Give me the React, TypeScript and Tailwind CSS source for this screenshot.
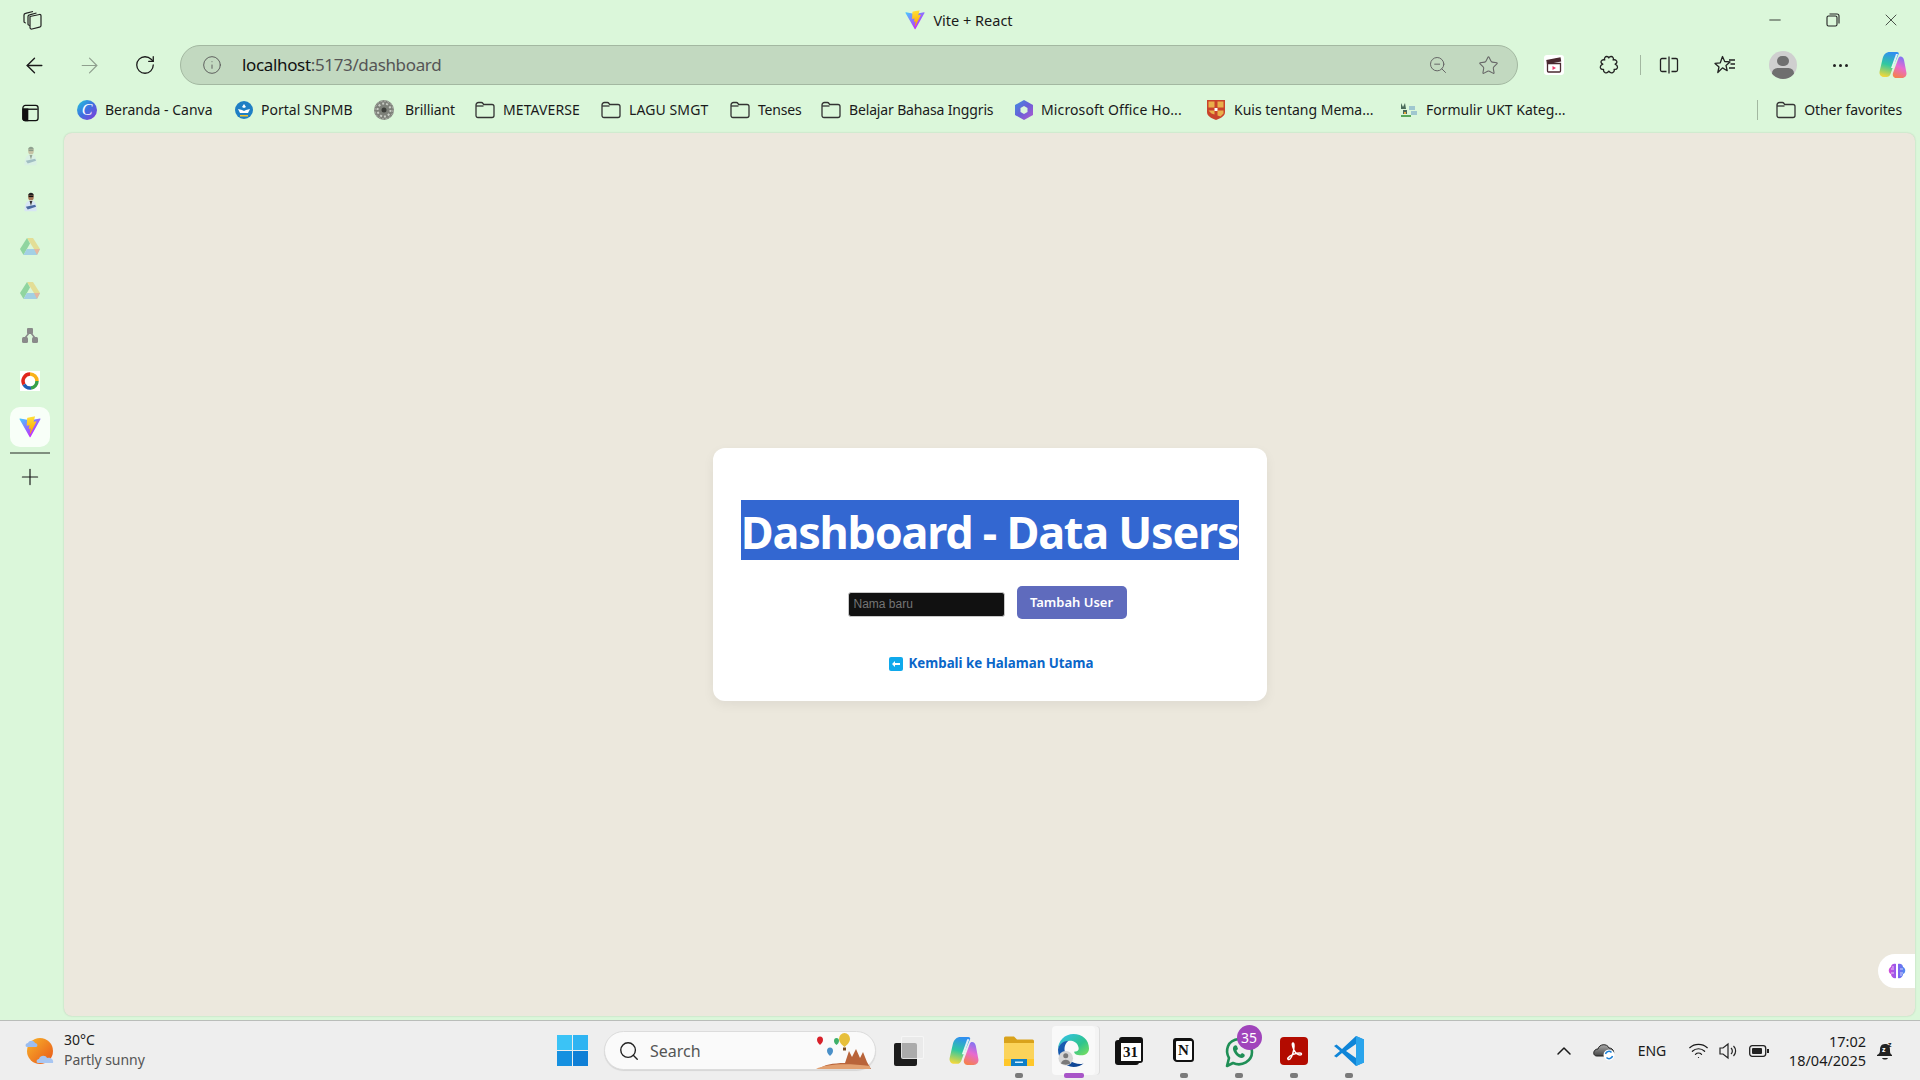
import React from "react";
import { ArrowLeft, ArrowRight, RotateCw, Info, ZoomOut, Star, Minus, Plus, X, ChevronUp, Search, Wifi } from "lucide-react";

const Vite = ({ size = 20, id }: { size?: number; id: string }) => (
  <svg width={size} height={size} viewBox="0 0 410 404" fill="none">
    <path fill={`url(#${id}a)`} d="M399.641 59.525 215.643 388.545c-3.799 6.793-13.559 6.833-17.415.073L10.582 59.556C6.38 52.19 12.68 43.266 21.028 44.76l184.195 32.923c1.175.21 2.378.208 3.553-.006l180.343-32.87c8.32-1.517 14.649 7.337 10.522 14.718Z" />
    <path fill={`url(#${id}b)`} d="M292.965 1.574 156.801 28.255a5 5 0 0 0-4.03 4.611l-8.376 141.464c-.197 3.332 2.863 5.918 6.115 5.168l37.91-8.749c3.547-.818 6.752 2.306 6.023 5.873l-11.263 55.153c-.758 3.712 2.727 6.886 6.352 5.785l23.415-7.114c3.63-1.102 7.118 2.081 6.35 5.796l-17.899 86.633c-1.12 5.419 6.088 8.374 9.094 3.728l2.008-3.103 110.954-221.428c1.858-3.707-1.346-7.935-5.418-7.15l-39.022 7.532c-3.667.707-6.787-2.708-5.752-6.296l25.469-88.291c1.036-3.594-2.095-7.012-5.766-6.293Z" />
    <defs>
      <linearGradient id={`${id}a`} x1="6" y1="33" x2="235" y2="344" gradientUnits="userSpaceOnUse"><stop stopColor="#41D1FF" /><stop offset="1" stopColor="#BD34FE" /></linearGradient>
      <linearGradient id={`${id}b`} x1="194" y1="8" x2="236" y2="292" gradientUnits="userSpaceOnUse"><stop stopColor="#FFEA83" /><stop offset=".08" stopColor="#FFDD35" /><stop offset="1" stopColor="#FFA800" /></linearGradient>
    </defs>
  </svg>
);

const Folder = () => (
  <svg width="20" height="18" viewBox="0 0 20 18" fill="none" stroke="#333" strokeWidth="1.3">
    <path d="M1 4c0-1.500 1-2.500 2.500-2.500h2.800c.8 0 1.200.3 1.700 1l.7 1h8.300c1.200 0 2 .8 2 2v9c0 1.300-.8 2-2 2H3c-1.200 0-2-.7-2-2V4Z" />
    <path d="M1 5h7.500" />
  </svg>
);

const Canva = () => (
  <div className="w-[20px] h-[20px] rounded-full bg-gradient-to-br from-[#16c8d8] via-[#3e6de0] to-[#7a2fd8] flex items-center justify-center text-white italic text-[16px] font-['Liberation_Serif',serif] leading-none">C</div>
);
const Snpmb = () => (
  <svg width="18" height="18" viewBox="0 0 18 18"><circle cx="9" cy="9" r="9" fill="#1f7fc4" /><path d="M9 3l2 3-2 1-2-1zM3 8l4 1 2 1 2-1 4-1-2 4H5z" fill="#fff" /><path d="M5 14h8v1.500H5z" fill="#f2c230" /></svg>
);
const Brilliant = () => (
  <svg width="20" height="20" viewBox="0 0 20 20"><circle cx="10" cy="10" r="10" fill="#7d8079" /><circle cx="10" cy="10" r="6.500" fill="none" stroke="#c8cbc4" strokeWidth="2" strokeDasharray="2 2" /><circle cx="10" cy="10" r="2.500" fill="#3c3e3a" /><circle cx="10" cy="10" r="9" fill="none" stroke="#b6b9b2" strokeWidth="1" strokeDasharray="2 1.500" /></svg>
);
const Office = () => (
  <svg width="18" height="20" viewBox="0 0 18 20"><defs><linearGradient id="off" x1="0" y1="0" x2="1" y2="1"><stop stopColor="#3f8fe0" /><stop offset=".5" stopColor="#6a5fd8" /><stop offset="1" stopColor="#b45ad0" /></linearGradient></defs><path d="M9 0l9 5v10l-9 5-9-5V5z" fill="url(#off)" /><path d="M9 6l3.500 2v4L9 14l-3.500-2V8z" fill="#dbf7da" /></svg>
);
const Shield = () => (
  <svg width="18" height="20" viewBox="0 0 18 20"><path d="M0 0h18v12c0 4-4 6-9 8-5-2-9-4-9-8z" fill="#c9432b" /><path d="M1.500 1.500h6v6h-6zM10.500 1.500h6v6h-6zM1.500 10.500h6v4l-3-1zM10.500 10.500h6v3l-3 3-3-1z" fill="#e9b04a" /><path d="M7.500 8h3v3h-3z" fill="#fff" /></svg>
);
const Ukt = () => (
  <svg width="18" height="18" viewBox="0 0 18 18"><path d="M1 2l2 4 2-4 1 6H1zM3 9h4v4H3z" fill="#4a6a5a" /><path d="M9 5h6v4H9zM11 10h6v4h-6z" fill="#9fc7cf" /><path d="M1 14h10v2H1z" fill="#5aa85a" /><path d="M4 11h2v2H4z" fill="#e2a63a" /></svg>
);

const bookmarks = [
  { w: "w-[158px]", gap: "gap-[8px]", icon: <Canva />, label: "Beranda - Canva", text: "tracking-[0px]" },
  { w: "w-[139px]", gap: "gap-[8px]", icon: <Snpmb />, label: "Portal SNPMB", text: "tracking-[0px]" },
  { w: "w-[101px]", gap: "gap-[11px]", icon: <Brilliant />, label: "Brilliant", text: "tracking-[-0.1px]" },
  { w: "w-[126px]", gap: "gap-[8px]", icon: <Folder />, label: "METAVERSE", text: "tracking-[0.1px]" },
  { w: "w-[129px]", gap: "gap-[8px]", icon: <Folder />, label: "LAGU SMGT", text: "tracking-[0.1px]" },
  { w: "w-[91px]", gap: "gap-[8px]", icon: <Folder />, label: "Tenses", text: "tracking-[-0.2px]" },
  { w: "w-[194px]", gap: "gap-[8px]", icon: <Folder />, label: "Belajar Bahasa Inggris", text: "tracking-[-0.15px]" },
  { w: "w-[192px]", gap: "gap-[8px]", icon: <Office />, label: "Microsoft Office Ho...", text: "tracking-[0.12px]" },
  { w: "w-[193px]", gap: "gap-[9px]", icon: <Shield />, label: "Kuis tentang Mema...", text: "tracking-[0px]" },
  { w: "w-[166px]", gap: "gap-[8px]", icon: <Ukt />, label: "Formulir UKT Kateg...", text: "tracking-[0px]" },
];

const Person = ({ faded }: { faded?: boolean }) => (
  <svg width="13" height="20" viewBox="0 0 14 20" className={faded ? "opacity-40" : ""}>
    <ellipse cx="7.500" cy="4.500" rx="3" ry="4" fill="#a87858" />
    <path d="M4.500 3c0-4 6-4 6 0z" fill="#222" />
    <rect x="5" y="3.500" width="5" height="1.200" fill="#111" />
    <path d="M0.500 20c0-7 2-11.500 7-11.500S14 13 13.500 20z" fill="#d8e6f4" />
    <path d="M6 9l1.500 5L9 9z" fill="#333" />
    <path d="M2 15l10-2 1 2-9 3z" fill="#4a6aa0" />
  </svg>
);
const Drive = () => (
  <svg width="20" height="17" viewBox="0 0 20 17" className="opacity-60">
    <path d="M7 0h6l7 11h-6z" fill="#e9cf6a" />
    <path d="M7 0l3 5.500L3.500 17 0 11z" fill="#5fbf7a" />
    <path d="M3.500 17L6.800 11H20l-3 6z" fill="#7fb7ec" />
    <path d="M14 11h6l-3 6z" fill="#ea8f7a" />
  </svg>
);
const Nodes = () => (
  <svg width="16" height="15" viewBox="0 0 16 15" fill="#8a8a8a">
    <rect x="5" y="0" width="6" height="6" rx="1" />
    <rect x="0" y="9" width="6" height="6" rx="1.500" />
    <rect x="10" y="9" width="6" height="6" rx="1.500" />
    <path d="M7 5L3 10M9 5l4 5" stroke="#8a8a8a" strokeWidth="1.500" />
  </svg>
);
const Ring = () => (
  <div className="w-[20px] h-[20px] bg-white flex items-center justify-center">
    <svg width="18" height="18" viewBox="0 0 18 18" fill="none" strokeWidth="3.500">
      <path d="M3 12.500A7 7 0 0 1 9 2" stroke="#e0251b" />
      <path d="M9 2a7 7 0 0 1 7 7" stroke="#f9b21a" />
      <path d="M16 9a7 7 0 0 1-6 7" stroke="#37a04a" />
      <path d="M10 16a7 7 0 0 1-7-3.500" stroke="#1e5fb4" />
    </svg>
  </div>
);

const Clapper = () => (
  <div className="w-[20px] h-[20px] rounded-[3px] bg-white flex items-center justify-center">
    <svg width="16" height="16" viewBox="0 0 16 16" fill="none" stroke="#4a2a30" strokeWidth="1.300">
      <path d="M1.500 6.500h13v7.500a1 1 0 0 1-1 1h-11a1 1 0 0 1-1-1z" />
      <path d="M1.500 6.500L1 3.500 14 1l.5 3z" fill="#4a2a30" />
      <path d="M6.500 9v4l3.500-2z" fill="#ee3a6a" stroke="none" />
    </svg>
  </div>
);
const Ext = () => (
  <svg width="20" height="20" viewBox="0 0 20 20" fill="none" stroke="#222" strokeWidth="1.300" strokeLinejoin="round">
    <path d="M10 2.800C8.800 1.300 7 1 6 2.300 5.300 3.200 5.400 4.200 5.800 5 4.700 4.600 3 4.800 2.300 6c-.7 1.300.2 2.700 1.500 3.200C2 10 .9 11.300 1.500 13c.5 1.300 2 1.600 3.100 1.300-.3 1.200.2 2.700 1.500 3.300 1.500.6 3-.3 3.700-1.500.8 1.200 2.300 2.200 3.900 1.500 1.300-.6 1.800-2.100 1.400-3.300 1.200.3 2.700 0 3.200-1.300.6-1.700-.5-3-2.200-3.800 1.300-.5 2.200-1.900 1.500-3.200-.7-1.200-2.400-1.400-3.500-1 .4-.8.5-1.800-.2-2.700-1-1.300-2.800-1-4.300.5z" />
  </svg>
);
const Split = () => (
  <svg width="20" height="20" viewBox="0 0 20 20" fill="none" stroke="#222" strokeWidth="1.300">
    <path d="M7.500 3.500H3a1.500 1.500 0 0 0-1.500 1.500v10A1.500 1.500 0 0 0 3 16.500h4.500" />
    <path d="M12.500 3.500H17A1.500 1.500 0 0 1 18.500 5v10a1.500 1.500 0 0 1-1.500 1.500h-4.500" />
    <path d="M10 1.500v17" />
  </svg>
);
const Favs = () => (
  <svg width="22" height="20" viewBox="0 0 22 20" fill="none" stroke="#222" strokeWidth="1.300" strokeLinejoin="round">
    <path d="M8.500 1.500l2.200 5 5.300.4-4 3.500 1.200 5.300-4.700-2.800L3.800 17.500l1.200-5.600-4-3.500 5.300-.6z" />
    <path d="M15 5h6M16.500 9H21M15 13h6" />
  </svg>
);
const Avatar = () => (
  <div className="w-[28px] h-[28px] rounded-full bg-[#cfcfcf] overflow-hidden relative flex flex-col items-center">
    <div className="w-[12px] h-[12px] rounded-full bg-[#6f6f6f] mt-[5px]" />
    <div className="w-[22px] h-[14px] rounded-full bg-[#6f6f6f] mt-[2px]" />
  </div>
);
const Copilot = ({ size = 28, id }: { size?: number; id: string }) => (
  <svg width={size} height={size} viewBox="0 0 28 28">
    <defs>
      <linearGradient id={`${id}1`} x1="0.5" y1="0" x2="0.3" y2="1"><stop stopColor="#2f8ff0" /><stop offset=".5" stopColor="#30c8a0" /><stop offset="1" stopColor="#f5d83a" /></linearGradient>
      <linearGradient id={`${id}2`} x1="0.7" y1="0" x2="0.4" y2="1"><stop stopColor="#7a74f5" /><stop offset=".5" stopColor="#e86ad0" /><stop offset="1" stopColor="#f58050" /></linearGradient>
    </defs>
    <path d="M11 1h7c1.500 0 2.200 1 1.600 2.300L14 16l-2.500 7c-.6 1.800-2 3-4 3H5c-3 0-5-2.500-4.400-5.500L3.500 8C4.500 3.500 7 1 11 1z" fill={`url(#${id}1)`} />
    <path d="M17 27h6c3 0 5-2.500 4.400-5.500L25 9c-.5-2-1.700-3.500-3.500-3.500-1 0-1.600.6-2 1.500L14 22c-.8 2.500.6 5 3 5z" fill={`url(#${id}2)`} />
    <path d="M19 3l-5 14-2 0 5-14z" fill="#fff" opacity=".85" />
  </svg>
);

const WinLogo = () => (
  <div className="grid grid-cols-2 gap-[1px] w-[31px] h-[31px]">
    <div className="bg-[#3bc3f6]" /><div className="bg-[#2fb4f2]" />
    <div className="bg-[#1590e0]" /><div className="bg-[#0f7fd6]" />
  </div>
);
const Balloons = () => (
  <svg width="60" height="36" viewBox="0 0 60 36">
    <path d="M4 7a3 3.500 0 1 1 6 0c0 2-2 4-3 5-1-1-3-3-3-5z" fill="#d8202a" />
    <path d="M14 18a3 3.500 0 1 1 6 0c0 2-2 4-3 5-1-1-3-3-3-5z" fill="#4a90c8" />
    <path d="M21 8a2.500 3 0 1 1 5 0c0 2-1.500 3-2.500 4-1-1-2.500-2-2.500-4z" fill="#3fb06a" />
    <path d="M26 6a5.500 6 0 1 1 11 0c0 3-3 6-5.500 8C29 12 26 9 26 6z" fill="#e7bf3a" />
    <path d="M30 14.500h3v3h-3z" fill="#7a4a20" />
    <path d="M6 36c4-4 14-6 26-6l4-12 3 6 4-8 4 9 3-6 4 10 4 7z" fill="#b9643a" />
    <path d="M3 36c10-5 30-6 54-3v3z" fill="#e2a070" />
  </svg>
);
const TaskView = () => (
  <div className="relative w-[30px] h-[30px]">
    <div className="absolute left-0 bottom-0 w-[23px] h-[23px] rounded-[2px] bg-[#1c1c1c]" />
    <div className="absolute right-0 top-0 w-[23px] h-[23px] rounded-[2px] bg-[#e8e8e8]/70 border border-white/60" />
  </div>
);
const Explorer = () => (
  <svg width="30" height="32" viewBox="0 0 30 32">
    <path d="M0 3a1.500 1.500 0 0 1 1.500-1.500H10l3 3h15.500A1.500 1.500 0 0 1 30 6v3H0z" fill="#d9a21b" />
    <path d="M0 8h30v22a1 1 0 0 1-1 1H1a1 1 0 0 1-1-1z" fill="#fbd35a" />
    <path d="M0 24h30v7H0z" fill="#ffc72a" />
    <path d="M7 24h16v7H7z" fill="#0f7fc8" />
    <path d="M11 26.500h8v1.500h-8z" fill="#d5eefb" />
  </svg>
);
const Edge = () => (
  <svg width="31" height="33" viewBox="0 0 32 34">
    <defs>
      <linearGradient id="ed1" x1="0" y1="0" x2="1" y2="1"><stop stopColor="#35c1f1" /><stop offset=".6" stopColor="#2fc48d" /><stop offset="1" stopColor="#7fe05a" /></linearGradient>
      <linearGradient id="ed2" x1="0" y1="0" x2="1" y2="1"><stop stopColor="#1a62b8" /><stop offset="1" stopColor="#0c3f8c" /></linearGradient>
    </defs>
    <path d="M16 0c9 0 16 6 16 15 0 5-4 7-8 7-5 0-8-2-7-4 4 0 5-2 4-5-1-4-5-6-9-6C6 7 1 11 0 16 0 7 7 0 16 0z" fill="url(#ed1)" />
    <path d="M0 16c1-6 6-9 11-9-3 2-5 6-4 11 1 7 8 13 16 13 2 0 3 0 4-1-3 3-7 4-11 4C7 34 0 26 0 16z" fill="url(#ed2)" />
    <circle cx="8" cy="25" r="7.500" fill="#d6d6d6" />
    <circle cx="8" cy="22.500" r="2.600" fill="#7a7a7a" />
    <path d="M3 30.500c1-3 3-4 5-4s4 1 5 4c-3 1.500-7 1.500-10 0z" fill="#7a7a7a" />
  </svg>
);
const Calendar = () => (
  <div className="relative w-[28px] h-[28px]">
    <div className="absolute left-0 top-[3px] w-[24px] h-[25px] rounded-[3px] bg-[#111]" />
    <div className="absolute right-0 top-0 w-[24px] h-[26px] rounded-[3px] bg-[#111] border-[2px] border-[#111] flex items-end justify-center">
      <div className="w-full h-[18px] bg-white text-[#111] text-[15px] leading-[18px] font-bold text-center font-['Liberation_Serif',serif]">31</div>
    </div>
  </div>
);
const Notion = () => (
  <div className="w-[20px] h-[23px] bg-white border-[2px] border-[#111] rounded-[3px] shadow-[-1px_-1px_0_#111] flex items-center justify-center text-[#111] font-bold text-[15px] leading-none font-['Liberation_Serif',serif]">N</div>
);
const WhatsApp = () => (
  <div className="relative w-[30px] h-[30px]">
    <svg width="30" height="32" viewBox="0 0 30 32" fill="none" className="absolute left-0 top-0">
      <path d="M3 30l2-8C1 15 3 4 15 3c9 0 13 7 13 13 0 9-10 15-19 11z" stroke="#1f8f56" strokeWidth="2.600" strokeLinejoin="round" />
      <path d="M10 10c-2 2-1 5 2 9 3 3 6 4 8 2 1-1 1-2 0-3l-2-1-1.500 1.500c-2-.5-3.500-2.500-4-4L14 13l-1-3c-1-1-2-1-3 0z" fill="#1f8f56" />
    </svg>
    <div className="absolute left-[13px] top-[-11px] w-[25px] h-[25px] rounded-full bg-[#a044bb] text-white text-[14px] leading-[25px] text-center">35</div>
  </div>
);
const Acrobat = () => (
  <div className="w-[28px] h-[28px] rounded-[4px] bg-[#b30b00] flex items-center justify-center">
    <svg width="20" height="20" viewBox="0 0 20 20" fill="none" stroke="#fff" strokeWidth="1.500">
      <path d="M9 2c-1 0-1 3 1 7 1.500 3 4 5 6 5 2 0 2-2 0-2-4 0-10 2-12 5-1 1.500 1 2 2 1 2-2 4-8 4-13 0-2-.5-3-1-3z" />
    </svg>
  </div>
);
const VSCode = () => (
  <svg width="30" height="30" viewBox="0 0 30 30">
    <path d="M22 0l8 3.500v23L22 30 8 17l-5.500 4.500L0 20l6-5-6-5 2.500-1.500L8 13 22 0z" fill="#0f85d8" />
    <path d="M22 8L12 15l10 7z" fill="#eeeeee" />
    <path d="M22 0l8 3.500v23L22 30z" fill="#2aa4ec" />
  </svg>
);
const Weather = () => (
  <svg width="30" height="30" viewBox="0 0 30 30">
    <defs><linearGradient id="sun" x1="0" y1="0" x2="1" y2="1"><stop stopColor="#f8b52a" /><stop offset="1" stopColor="#e8551a" /></linearGradient></defs>
    <circle cx="15" cy="15" r="13" fill="url(#sun)" />
    <path d="M2 11c-2 0-2-4 1-4 1-3 6-3 7 0 3 0 3 4 1 4z" fill="#9bbdf0" />
    <path d="M13 27c-2 0-2-4 1-4 1-4 7-4 8-1 4-1 7 2 6 5z" fill="#a8c6f2" />
  </svg>
);

const TaskIcon = ({ children, dot }: { children: React.ReactNode; dot?: boolean }) => (
  <div className="relative w-[55px] h-[60px] flex items-center justify-center">
    {children}
    {dot && <div className="absolute bottom-[3px] left-1/2 -translate-x-1/2 w-[8px] h-[5px] rounded-[2px] bg-[#7a7a7a]" />}
  </div>
);

export default function App() {
  return (
    <div className="w-[1920px] h-[1080px] overflow-hidden flex flex-col bg-[#dbf7da] text-[#1a1a1a] font-['Noto_Sans',sans-serif]">
      {/* Title bar */}
      <div className="h-[44px] shrink-0 flex items-center relative">
        <div className="w-[64px] flex justify-center -mt-[4px]">
          <svg width="22" height="22" viewBox="0 0 22 22" fill="none" stroke="#222" strokeWidth="1.200" strokeLinejoin="round">
            <path d="M9 7.500l9.500-2c1-.2 1.500.4 1.500 1.400v9.600c0 1-.5 1.500-1.500 1.700l-7.500 1.800c-1 .2-2-.3-2-1.400z" />
            <path d="M9 16.500c-1 0-2-.5-2-1.500V7.500c0-1 .5-1.500 1.500-1.700L15.500 4" />
            <path d="M5 14c-1 0-2-.5-2-1.500V6c0-1 .5-1.500 1.500-1.700L12 2.500" />
          </svg>
        </div>
        <div className="flex-1 flex items-center justify-center -mt-[4px] gap-[8px] pl-[108px]">
          <Vite size={20} id="t" />
          <span className="text-[14.500px] leading-none">Vite + React</span>
        </div>
        <div className="flex items-center -mt-[4px]">
          <div className="w-[58px] flex justify-center"><Minus size={18} strokeWidth={1.100} /></div>
          <div className="w-[58px] flex justify-center">
            <svg width="14" height="14" viewBox="0 0 14 14" fill="none" stroke="#222" strokeWidth="1.100"><rect x="1" y="3" width="10" height="10" rx="1.500" /><path d="M3.500 1H11a2 2 0 0 1 2 2v7.500" /></svg>
          </div>
          <div className="w-[58px] flex justify-center"><X size={20} strokeWidth={0.900} /></div>
        </div>
      </div>

      {/* Toolbar */}
      <div className="h-[42px] shrink-0 flex items-center pl-[7px]">
        <div className="w-[55px] flex justify-center"><ArrowLeft size={25} strokeWidth={1.300} /></div>
        <div className="w-[55px] flex justify-center"><ArrowRight size={25} strokeWidth={1.100} color="#8f9f8e" /></div>
        <div className="w-[55px] flex justify-center"><RotateCw size={22} strokeWidth={1.400} /></div>
        <div className="ml-[8px] w-[1338px] h-[40px] rounded-full bg-[#c2d9c0] border border-[#a3b8a1] flex items-center shrink-0">
          <div className="w-[61px] flex justify-center"><Info size={20} strokeWidth={1.100} color="#555" /></div>
          <span className="text-[17px] leading-none text-[#111] tracking-[-0.35px] -mt-[2px]">localhost<span className="text-[#555]">:5173/dashboard</span></span>
          <div className="ml-auto flex items-center pr-[18px] gap-[30px]">
            <ZoomOut size={20} strokeWidth={1.200} color="#666" />
            <Star size={21} strokeWidth={1.200} color="#666" />
          </div>
        </div>
        <div className="ml-[14px] w-[44px] flex justify-center"><Clapper /></div>
        <div className="ml-[11px] w-[44px] flex justify-center"><Ext /></div>
        <div className="ml-[9px] w-[1px] h-[20px] bg-[#a3b8a1]" />
        <div className="ml-[6px] w-[44px] flex justify-center"><Split /></div>
        <div className="ml-[12px] w-[44px] flex justify-center"><Favs /></div>
        <div className="ml-[14px] w-[44px] flex justify-center"><Avatar /></div>
        <div className="ml-[13px] w-[44px] flex justify-center gap-[3px]">
          <div className="w-[3px] h-[3px] rounded-full bg-[#222]" /><div className="w-[3px] h-[3px] rounded-full bg-[#222]" /><div className="w-[3px] h-[3px] rounded-full bg-[#222]" />
        </div>
        <div className="ml-[9px] w-[44px] flex justify-center"><Copilot id="cp" /></div>
      </div>

      {/* Bookmarks */}
      <div className="h-[47px] shrink-0 flex items-center">
        <div className="w-[64px] flex justify-center shrink-0 pr-[3px] pt-[6px]">
          <svg width="17" height="18" viewBox="0 0 18 18" fill="none" stroke="#111" strokeWidth="1.400"><rect x="1" y="1" width="16" height="16" rx="2.500" /><path d="M1.500 5h15" /><path d="M1 5h5v12H3a2 2 0 0 1-2-2z" fill="#111" /></svg>
        </div>
        <div className="ml-[13px] flex items-center">
          {bookmarks.map((b) => (
            <div key={b.label} className={`${b.w} ${b.gap} flex items-center shrink-0 whitespace-nowrap`}>
              <div className="shrink-0 flex items-center">{b.icon}</div>
              <span className={`${b.text} text-[14px] leading-none`}>{b.label}</span>
            </div>
          ))}
        </div>
        <div className="ml-auto flex items-center pr-[18px]">
          <div className="w-[1px] h-[20px] bg-[#a3b8a1] mr-[18px]" />
          <Folder />
          <span className="ml-[8px] text-[14px] leading-none tracking-[-0.1px]">Other favorites</span>
        </div>
      </div>

      {/* Body */}
      <div className="flex-1 min-h-0 flex">
        <div className="w-[64px] shrink-0 flex flex-col items-center pr-[4px]">
          <div className="h-[46px] flex items-center justify-center"><Person faded /></div>
          <div className="h-[45px] flex items-center justify-center"><Person /></div>
          <div className="h-[44px] flex items-center justify-center"><Drive /></div>
          <div className="h-[45px] flex items-center justify-center"><Drive /></div>
          <div className="h-[45px] flex items-center justify-center"><Nodes /></div>
          <div className="h-[45px] flex items-center justify-center"><Ring /></div>
          <div className="w-[40px] h-[40px] mt-[4px] rounded-[10px] bg-[#f8fff8] flex items-center justify-center"><Vite size={22} id="s" /></div>
          <div className="w-[40px] h-[2px] bg-[#7f8f7e] mt-[5px]" />
          <div className="mt-[10px]"><Plus size={26} strokeWidth={1.100} /></div>
        </div>
        <div className="flex-1 mr-[5px] mb-[4px] rounded-[8px] bg-[#ece8dd] shadow-[0_0_2px_rgba(0,0,0,0.18)] relative flex items-center justify-center">
          <div className="w-[554px] h-[253px] rounded-[12px] bg-white shadow-[0_4px_12px_rgba(0,0,0,0.06)] flex flex-col items-center pt-[52px]">
            <h1 className="w-[498px] h-[60px] bg-[#3367d1] text-white font-bold text-[45px] tracking-[-1.25px] leading-[63px] text-center whitespace-nowrap font-['Noto_Sans',sans-serif]">Dashboard - Data Users</h1>
            <div className="mt-[26px] h-[33px] flex items-center gap-[12px] mr-[5px]">
              <input placeholder="Nama baru" className="w-[157px] h-[25px] mt-[3px] rounded-[3px] bg-[#111111] border border-[#c8c8c8] px-[5px] text-[12px] text-white placeholder:text-[#757575] font-['Liberation_Sans',sans-serif]" />
              <button className="w-[110px] h-[33px] rounded-[5px] bg-[#5f6bbd] text-white text-[13px] font-semibold">Tambah User</button>
            </div>
            <div className="mt-[38px] flex items-center gap-[6px] text-[#0a66c9] text-[13.300px] font-bold leading-none ml-[3px]">
              <svg width="14" height="14" viewBox="0 0 14 14"><rect width="14" height="14" rx="2" fill="#0fa9ec" /><path d="M3 7l3-3v2h5v2H6v2z" fill="#fff" /></svg>
              <span>Kembali ke Halaman Utama</span>
            </div>
          </div>
          <div className="absolute right-0 top-[821px] w-[37px] h-[34px] rounded-l-full bg-white flex items-center justify-center">
            <svg width="18" height="16" viewBox="0 0 18 16"><defs><linearGradient id="br" x1="0" y1="0" x2="1" y2="0"><stop stopColor="#d34bd8" /><stop offset=".5" stopColor="#8a5cf0" /><stop offset="1" stopColor="#4a8df0" /></linearGradient></defs><path d="M8 1C5 0 3 2 3 4 0 5 0 10 3 11c0 3 3 5 5 4zM10 1c3-1 5 1 5 3 3 1 3 6 0 7 0 3-3 5-5 4z" fill="url(#br)" /><path d="M3 6h3M3 10h3M12 6h3M12 10h3M5 3v2M13 11v2" stroke="#fff" strokeWidth=".7" /></svg>
          </div>
        </div>
      </div>

      {/* Taskbar */}
      <div className="h-[60px] shrink-0 bg-[#eeeeee] border-t border-[#b9bdb9] flex items-center">
        <div className="w-[557px] shrink-0 pl-[25px] flex items-center gap-[9px]">
          <Weather />
          <div className="flex flex-col -mt-[2px]">
            <span className="text-[14px] leading-[20px] text-[#222]">30°C</span>
            <span className="text-[14px] leading-[20px] text-[#555] tracking-[-0.05px]">Partly sunny</span>
          </div>
        </div>
        <WinLogo />
        <div className="ml-[16px] w-[272px] h-[39px] rounded-full bg-[#fafafa] border border-[#dcdcdc] shadow-[0_1px_1px_rgba(0,0,0,0.1)] flex items-center pl-[13px] shrink-0">
          <Search size={22} strokeWidth={1.500} color="#222" />
          <span className="ml-[10px] text-[16px] text-[#555] leading-none">Search</span>
          <div className="ml-auto mr-[2px]"><Balloons /></div>
        </div>
        <div className="ml-[5px] flex items-center">
          <TaskIcon><TaskView /></TaskIcon>
          <TaskIcon><Copilot size={30} id="cq" /></TaskIcon>
          <TaskIcon dot><Explorer /></TaskIcon>
          <div className="relative w-[55px] h-[60px] flex items-center justify-center">
            <div className="absolute left-[6px] top-[5px] w-[43px] h-[49px] rounded-[4px] bg-[#f9f9f9] shadow-[4px_0_0_#f4f4f4,5px_0_0_#dddddd]" />
            <div className="relative"><Edge /></div>
            <div className="absolute bottom-[3px] left-1/2 -translate-x-1/2 w-[20px] h-[5px] rounded-[2px] bg-[#a855c8]" />
          </div>
          <TaskIcon><Calendar /></TaskIcon>
          <TaskIcon dot><Notion /></TaskIcon>
          <TaskIcon dot><WhatsApp /></TaskIcon>
          <TaskIcon dot><Acrobat /></TaskIcon>
          <TaskIcon dot><VSCode /></TaskIcon>
        </div>
        <div className="ml-auto flex items-center pr-[26px]">
          <ChevronUp size={24} strokeWidth={1.500} className="mr-[17px]" />
          <svg width="22" height="20" viewBox="0 0 22 20" className="mr-[23px]"><defs><linearGradient id="cl" x1="0" y1="0" x2="0" y2="1"><stop stopColor="#aaaaaa" /><stop offset="1" stopColor="#444444" /></linearGradient></defs><path d="M4 15c-5 0-4-7 1-7 1-5 9-6 11-1 5 0 6 6 3 8z" fill="url(#cl)" stroke="#222" /><circle cx="16" cy="14" r="5.500" fill="#fff" /><path d="M12.500 13a3.500 3.500 0 0 1 6-1.500M19.500 15a3.500 3.500 0 0 1-6 1.500" stroke="#1a7fd6" strokeWidth="1.500" fill="none" /></svg>
          <span className="text-[14px] leading-none w-[29px] mr-[21px] tracking-[-0.2px]">ENG</span>
          <Wifi size={21} strokeWidth={1.400} className="mr-[9px]" />
          <svg width="20" height="20" viewBox="0 0 20 20" fill="none" stroke="#222" strokeWidth="1.200" className="mr-[11px]"><path d="M2 7h3l5-4v14l-5-4H2z" /><path d="M13 7a4 4 0 0 1 0 6M15.500 5a7 7 0 0 1 0 10" /></svg>
          <svg width="20" height="12" viewBox="0 0 20 12" fill="none" className="mr-[20px]"><rect x=".7" y=".7" width="16" height="10.600" rx="2.500" stroke="#222" strokeWidth="1.300" /><rect x="3" y="3" width="10" height="6" rx="1" fill="#222" /><path d="M18 4h2v4h-2z" fill="#222" /></svg>
          <div className="flex flex-col items-end mr-[10px]">
            <span className="text-[14.500px] leading-[19px]">17:02</span>
            <span className="text-[14.500px] leading-[19px]">18/04/2025</span>
          </div>
          <svg width="18" height="20" viewBox="0 0 18 20"><path d="M9 3c-4 0-5 3-5 6 0 3-1 4-3 5v1h15v-1c-2-1-2-3-2-5 0-4-1-6-5-6zM6 17h6c-1 2-5 2-6 0z" fill="#222" /><text x="6" y="11" fontSize="7" fontWeight="700" fill="#fff">z</text><text x="12" y="6" fontSize="7" fontWeight="700" fill="#222">z</text></svg>
        </div>
      </div>
    </div>
  );
}
